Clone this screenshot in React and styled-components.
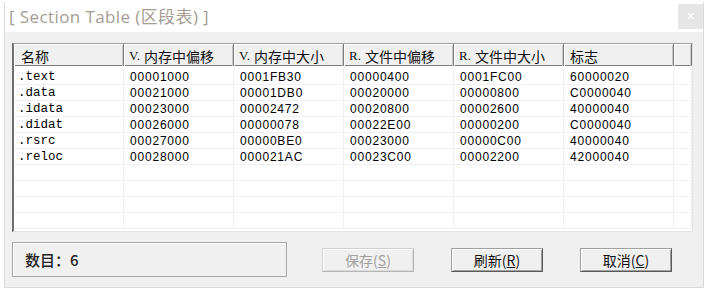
import React from "react";
import styled, { createGlobalStyle } from "styled-components";

const GlobalStyle = createGlobalStyle`
  html, body {
    margin: 0;
    padding: 0;
    background: #ffffff;
  }
`;

const Screen = styled.div`
  width: 708px;
  height: 290px;
  padding: 2px 4px 0 4px;
  box-sizing: border-box;
  overflow: hidden;
`;

const Dialog = styled.div`
  width: 700px;
  height: 286px;
  box-sizing: border-box;
  display: flex;
  flex-direction: column;
  border: 1px solid #d9d9d9;
  border-top: none;
  background: #f0f0f0;
`;

const TitleBar = styled.div`
  height: 30px;
  flex: none;
  display: flex;
  align-items: flex-start;
  justify-content: space-between;
  background: #ffffff;
`;

const Title = styled.span`
  margin: 4px 0 0 4px;
  font-family: "Open Sans", "Noto Sans CJK SC", sans-serif;
  font-size: 17px;
  letter-spacing: 0.4px;
  line-height: 22px;
  color: #a59c94;
`;

const CloseButton = styled.div`
  width: 25px;
  height: 25px;
  margin: 2px 0 0 0;
  background: #e6e6e6;
  color: #ffffff;
  display: flex;
  align-items: center;
  justify-content: center;
  font-family: "DejaVu Sans", sans-serif;
  font-size: 11px;
`;

const Body = styled.div`
  flex: 1;
  display: flex;
  flex-direction: column;
  padding: 11px 10px 0 7px;
`;

const ListView = styled.div`
  height: 189px;
  box-sizing: border-box;
  display: flex;
  flex-direction: column;
  background: #ffffff;
  border-style: solid;
  border-width: 1px 1px 1px 2px;
  border-color: #a0a0a0 #e3e3e3 #e3e3e3 #6f6f6f;
  overflow: hidden;
`;

const Columns = styled.div`
  display: grid;
  grid-template-columns: repeat(6, 110px) 1fr;
`;

const HeaderRow = styled(Columns)`
  height: 21px;
  flex: none;
  background: #f0f0f0;
  border-bottom: 1px solid #7a7a7a;
`;

const HeaderCell = styled.div`
  display: flex;
  align-items: center;
  padding: 2px 0 0 ${(p) => p.$pad}px;
  box-sizing: border-box;
  border-right: 1px solid #7a7a7a;
  box-shadow: inset 1px 1px 0 #ffffff, inset -1px 0 0 #c8c8c8;
  font-family: "Noto Sans CJK SC", sans-serif;
  font-size: 14px;
  color: #111;
  white-space: nowrap;
`;

const Prefix = styled.span`
  font-family: "Liberation Serif", serif;
  font-size: 13px;
  margin-right: 4px;
`;

const Rows = styled.div`
  flex: 1;
  padding-top: 3px;
`;

const Row = styled(Columns)`
  height: 16px;
  box-sizing: border-box;
  border-bottom: 1px solid #f0f0f0;
`;

const Cell = styled.div`
  padding-left: ${(p) => p.$pad}px;
  border-right: 1px solid #f0f0f0;
  font-family: ${(p) =>
    p.$mono ? '"Liberation Mono", monospace' : '"Liberation Sans", sans-serif'};
  font-size: ${(p) => (p.$mono ? "12.5px" : "12px")};
  letter-spacing: ${(p) => (p.$mono ? "0" : "0.8px")};
  line-height: 16px;
  color: #000;
  white-space: nowrap;
`;

const Footer = styled.div`
  display: flex;
  align-items: center;
  margin-top: 10px;
`;

const StatusBox = styled.div`
  width: 275px;
  height: 35px;
  box-sizing: border-box;
  display: flex;
  align-items: center;
  padding-left: 12px;
  border: 1px solid #a5a5a5;
  box-shadow: inset 1px 1px 0 #ffffff;
  font-family: "Noto Sans CJK SC", sans-serif;
  font-size: 15px;
  font-weight: 500;
  color: #222;
`;

const ButtonRow = styled.div`
  display: flex;
  gap: 37px;
  margin-left: 35px;
`;

const Button = styled.div`
  width: 92px;
  height: 24px;
  box-sizing: border-box;
  display: flex;
  align-items: center;
  justify-content: center;
  border: 1px solid;
  border-color: ${(p) =>
    p.$disabled ? "#d0d0d0 #b5b5b5 #b5b5b5 #d0d0d0" : "#a0a0a0 #5a5a5a #5a5a5a #a0a0a0"};
  box-shadow: inset 1px 1px 0 #ffffff,
    inset -1px -1px 0 ${(p) => (p.$disabled ? "#dadada" : "#a0a0a0")};
  background: #f0f0f0;
  font-family: "Noto Sans CJK SC", sans-serif;
  font-size: 14px;
  color: ${(p) => (p.$disabled ? "#a0a0a0" : "#111")};
`;

const Key = styled.span`
  text-decoration: underline;
`;

const headers = [
  { label: "名称", pad: 7 },
  { prefix: "V.", label: "内存中偏移", pad: 5 },
  { prefix: "V.", label: "内存中大小", pad: 5 },
  { prefix: "R.", label: "文件中偏移", pad: 5 },
  { prefix: "R.", label: "文件中大小", pad: 5 },
  { label: "标志", pad: 6 },
];

const sections = [
  [".text", "00001000", "0001FB30", "00000400", "0001FC00", "60000020"],
  [".data", "00021000", "00001DB0", "00020000", "00000800", "C0000040"],
  [".idata", "00023000", "00002472", "00020800", "00002600", "40000040"],
  [".didat", "00026000", "00000078", "00022E00", "00000200", "C0000040"],
  [".rsrc", "00027000", "00000BE0", "00023000", "00000C00", "40000040"],
  [".reloc", "00028000", "000021AC", "00023C00", "00002200", "42000040"],
];

const TOTAL_ROWS = 10;

const App = () => {
  const rows = [...sections];
  while (rows.length < TOTAL_ROWS) rows.push(["", "", "", "", "", ""]);

  return (
    <Screen>
      <GlobalStyle />
      <Dialog>
        <TitleBar>
          <Title>[ Section Table (区段表) ]</Title>
          <CloseButton>✕</CloseButton>
        </TitleBar>

        <Body>
          <ListView>
            <HeaderRow>
              {headers.map((h) => (
                <HeaderCell key={h.label} $pad={h.pad}>
                  {h.prefix && <Prefix>{h.prefix}</Prefix>}
                  {h.label}
                </HeaderCell>
              ))}
              <HeaderCell $pad={0} />
            </HeaderRow>

            <Rows>
              {rows.map((r, i) => (
                <Row key={i}>
                  {r.map((v, j) => (
                    <Cell key={j} $pad={j === 0 ? 4 : 6} $mono={j === 0}>
                      {v}
                    </Cell>
                  ))}
                  <Cell $pad={0} />
                </Row>
              ))}
            </Rows>
          </ListView>

          <Footer>
            <StatusBox>数目：6</StatusBox>
            <ButtonRow>
              <Button $disabled>
                保存(<Key>S</Key>)
              </Button>
              <Button>
                刷新(<Key>R</Key>)
              </Button>
              <Button>
                取消(<Key>C</Key>)
              </Button>
            </ButtonRow>
          </Footer>
        </Body>
      </Dialog>
    </Screen>
  );
};

export default App;
